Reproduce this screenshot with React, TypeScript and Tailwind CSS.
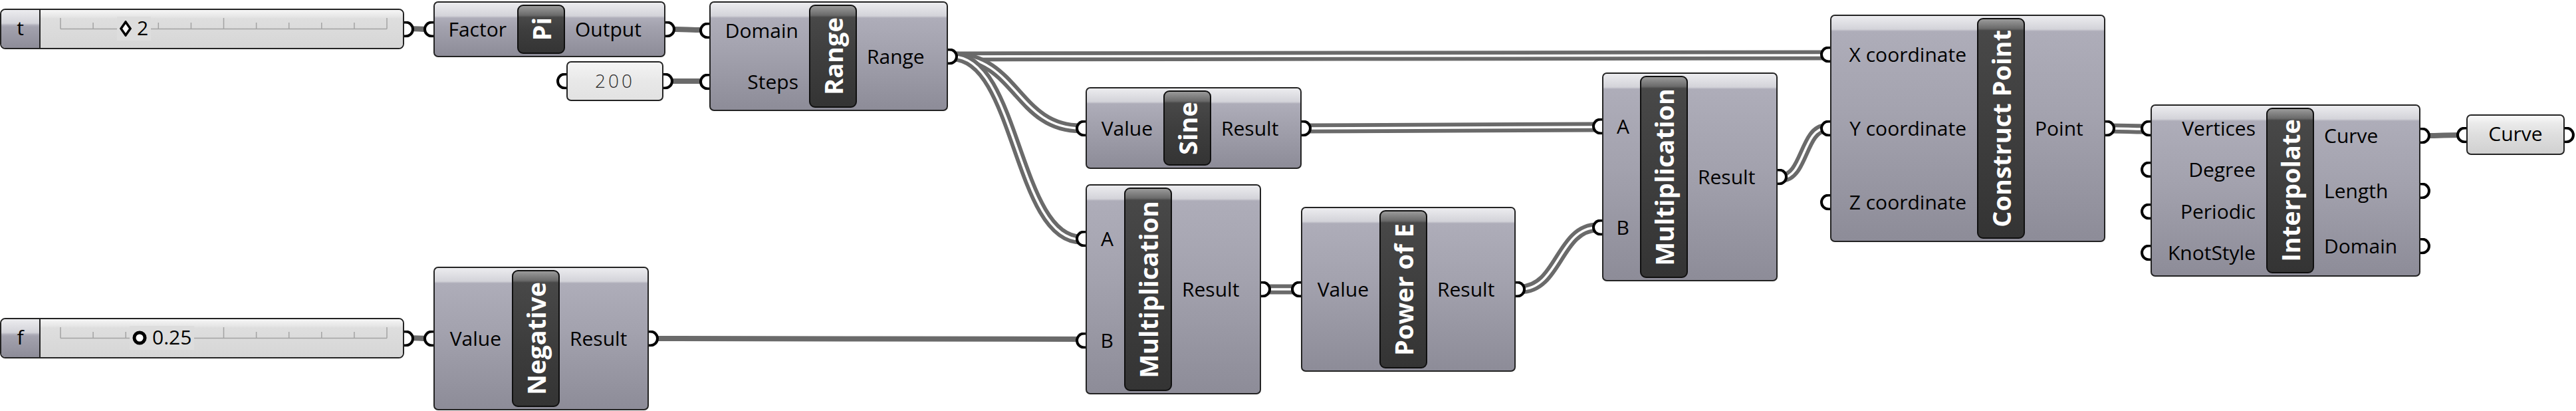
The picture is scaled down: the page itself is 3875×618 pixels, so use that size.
import React from "react";

type NodeDef = {
  x: number;
  y: number;
  w: number;
  h: number;
  lw: number;
  title: string;
  inputs: string[];
  outputs: string[];
};

const NODES: NodeDef[] = [
  { x: 652, y: 2, w: 349, h: 84, lw: 126, title: "Pi", inputs: ["Factor"], outputs: ["Output"] },
  { x: 1067, y: 2, w: 359, h: 165, lw: 150, title: "Range", inputs: ["Domain", "Steps"], outputs: ["Range"] },
  { x: 1633, y: 131, w: 325, h: 123, lw: 117, title: "Sine", inputs: ["Value"], outputs: ["Result"] },
  { x: 1633, y: 277, w: 264, h: 316, lw: 58, title: "Multiplication", inputs: ["A", "B"], outputs: ["Result"] },
  { x: 1957, y: 311, w: 323, h: 248, lw: 118, title: "Power of E", inputs: ["Value"], outputs: ["Result"] },
  { x: 2410, y: 109, w: 264, h: 314, lw: 57, title: "Multiplication", inputs: ["A", "B"], outputs: ["Result"] },
  { x: 652, y: 401, w: 324, h: 216, lw: 118, title: "Negative", inputs: ["Value"], outputs: ["Result"] },
  {
    x: 2753,
    y: 22,
    w: 414,
    h: 342,
    lw: 221,
    title: "Construct Point",
    inputs: ["X coordinate", "Y coordinate", "Z coordinate"],
    outputs: ["Point"],
  },
  {
    x: 3235,
    y: 157,
    w: 406,
    h: 259,
    lw: 174,
    title: "Interpolate",
    inputs: ["Vertices", "Degree", "Periodic", "KnotStyle"],
    outputs: ["Curve", "Length", "Domain"],
  },
];

type Wire = { x0: number; y0: number; x1: number; y1: number; list: boolean };

const WIRES: Wire[] = [
  { x0: 615, y0: 43, x1: 645, y1: 44, list: false },
  { x0: 1008, y0: 44, x1: 1060, y1: 45, list: false },
  { x0: 1005, y0: 122, x1: 1060, y1: 122, list: false },
  { x0: 1433, y0: 85, x1: 2746, y1: 83, list: true },
  { x0: 1433, y0: 85, x1: 1626, y1: 193, list: true },
  { x0: 1433, y0: 85, x1: 1626, y1: 360, list: true },
  { x0: 1965, y0: 193, x1: 2403, y1: 191, list: true },
  { x0: 615, y0: 508, x1: 645, y1: 509, list: false },
  { x0: 983, y0: 509, x1: 1626, y1: 510, list: false },
  { x0: 1904, y0: 435, x1: 1950, y1: 435, list: true },
  { x0: 2287, y0: 435, x1: 2403, y1: 342, list: true },
  { x0: 2681, y0: 267, x1: 2746, y1: 193, list: true },
  { x0: 3174, y0: 193, x1: 3228, y1: 194, list: true },
  { x0: 3648, y0: 204, x1: 3703, y1: 203, list: false },
];

function wirePath(w: Wire) {
  const k = Math.max(Math.abs(w.x1 - w.x0) * 0.5, 15);
  return `M${w.x0} ${w.y0} C${w.x0 + k} ${w.y0} ${w.x1 - k} ${w.y1} ${w.x1} ${w.y1}`;
}

function Port({ side }: { side: "l" | "r" }) {
  return side === "l" ? (
    <span className="absolute left-[-17px] top-1/2 -translate-y-1/2 w-[15px] h-[25px] rounded-l-full border-[4px] border-r-0 border-black bg-white" />
  ) : (
    <span className="absolute right-[-17px] top-1/2 -translate-y-1/2 w-[15px] h-[25px] rounded-r-full border-[4px] border-l-0 border-black bg-white" />
  );
}

const nodeBg =
  "bg-[linear-gradient(180deg,#ececef_0px,#d3d3d9_20px,#aeadb9_23px,#a3a2ae_45%,#8d8c98_100%)]";

function Node({ n }: { n: NodeDef }) {
  return (
    <div
      className={`absolute flex rounded-[7px] border-2 border-[#232323] py-[3px] ${nodeBg}`}
      style={{ left: n.x, top: n.y, width: n.w, height: n.h }}
    >
      <div className="flex flex-col shrink-0" style={{ width: n.lw - 2 }}>
        {n.inputs.map((s) => (
          <div key={s} className="relative flex-1 flex items-center justify-end pr-[16px]">
            <Port side="l" />
            <span className="text-[30px] leading-none whitespace-nowrap text-black">{s}</span>
          </div>
        ))}
      </div>
      <div className="w-[72px] shrink-0 rounded-[9px] border-2 border-[#0f0f0f] bg-[linear-gradient(180deg,#9a9a9a_0px,#6a6a6a_14px,#484848_17px,#3e3e3e_50%,#343434_100%)] flex items-center justify-center overflow-hidden">
        <span className="[writing-mode:vertical-rl] rotate-180 text-white font-bold text-[38px] leading-none whitespace-nowrap">
          {n.title}
        </span>
      </div>
      <div className="flex flex-col flex-1">
        {n.outputs.map((s) => (
          <div key={s} className="relative flex-1 flex items-center justify-start pl-[15px]">
            <Port side="r" />
            <span className="text-[30px] leading-none whitespace-nowrap text-black">{s}</span>
          </div>
        ))}
      </div>
    </div>
  );
}

function Slider({ top, label, value, ring }: { top: number; label: string; value: string; ring: boolean }) {
  const ticks = Array.from({ length: 11 }, (_, i) => 30 + i * 49.1);
  return (
    <div
      className="absolute left-0 w-[608px] h-[61px] flex rounded-[8px] border-2 border-[#232323] bg-[#dcdcdc]"
      style={{ top }}
    >
      <div className={`w-[59px] h-full flex items-center justify-center border-r-2 border-[#232323] rounded-l-[6px] text-[30px] leading-none ${nodeBg}`}>
        <span className="pb-[3px]">{label}</span>
      </div>
      <div className="relative flex-1 h-full rounded-r-[6px] bg-[linear-gradient(180deg,#f6f6f6_0px,#e6e6e6_10px,#dedede_13px,#d6d6d6_100%)]">
        <svg className="absolute left-0 top-0" width="545" height="57">
          <line x1="30" y1="28.5" x2="521" y2="28.5" stroke="#a3a3a3" strokeWidth="1.5" />
          {ticks.map((t, i) => (
            <line
              key={i}
              x1={t}
              x2={t}
              y1={i === 0 || i === 5 || i === 10 ? 12 : 19}
              y2={28.5}
              stroke="#a3a3a3"
              strokeWidth="1.5"
            />
          ))}
        </svg>
        <div
          className={`absolute top-[10px] h-[36px] flex items-center gap-[8px] bg-[#dddddd] px-[4px] ${ring ? "left-[134px]" : "left-[115px]"}`}
        >
          {ring ? (
            <svg width="22" height="22" viewBox="0 0 22 22">
              <circle cx="11" cy="11" r="8" fill="#fff" stroke="#000" strokeWidth="5" />
            </svg>
          ) : (
            <svg width="18" height="24" viewBox="0 0 18 24">
              <polygon points="9,2 16,12 9,22 2,12" fill="#fff" stroke="#000" strokeWidth="3.5" strokeLinejoin="miter" />
            </svg>
          )}
          <span className="text-[30px] leading-none pb-[3px]">{value}</span>
        </div>
        <Port side="r" />
      </div>
    </div>
  );
}

function Param({ left, top, w, h, text, panel }: { left: number; top: number; w: number; h: number; text: string; panel?: boolean }) {
  return (
    <div
      className={`absolute flex items-center justify-center rounded-[7px] border-2 border-[#232323] ${
        panel
          ? "bg-[linear-gradient(180deg,#f4f4f4_0px,#e8e8e8_50%,#e2e2e2_100%)]"
          : "bg-[linear-gradient(180deg,#fafafa_0px,#eaeaea_12px,#dedede_50%,#d0d0d0_100%)]"
      }`}
      style={{ left, top, width: w, height: h }}
    >
      <div className="absolute left-0 top-0 h-full">
        <span className="absolute left-[-17px] top-1/2 -translate-y-1/2 w-[15px] h-[25px] rounded-l-full border-[4px] border-r-0 border-black bg-white" />
      </div>
      <span
        className={
          panel
            ? "font-light text-[28px] tracking-[4px] text-[#2a2a2a] leading-none pb-[3px]"
            : "text-[30px] leading-none pb-[3px]"
        }
      >
        {text}
      </span>
      <div className="absolute right-0 top-0 h-full">
        <span className="absolute right-[-17px] top-1/2 -translate-y-1/2 w-[15px] h-[25px] rounded-r-full border-[4px] border-l-0 border-black bg-white" />
      </div>
    </div>
  );
}

export default function App() {
  return (
    <div className="relative w-[3875px] h-[618px] bg-white overflow-hidden font-['Open_Sans',sans-serif] text-black">
      <svg className="absolute left-0 top-0" width="3875" height="618">
        {WIRES.map((w, i) =>
          w.list ? (
            <g key={i}>
              <path d={wirePath(w)} fill="none" stroke="#6a6a6a" strokeWidth="15" />
              <path d={wirePath(w)} fill="none" stroke="#ffffff" strokeWidth="3.5" />
            </g>
          ) : (
            <path key={i} d={wirePath(w)} fill="none" stroke="#6a6a6a" strokeWidth="8" />
          )
        )}
      </svg>
      <Slider top={13} label="t" value="2" ring={false} />
      <Slider top={478} label="f" value="0.25" ring={true} />
      <Param left={852} top={92} w={146} h={60} text="200" panel />
      <Param left={3710} top={172} w={148} h={61} text="Curve" />
      {NODES.map((n, i) => (
        <Node key={i} n={n} />
      ))}
    </div>
  );
}
